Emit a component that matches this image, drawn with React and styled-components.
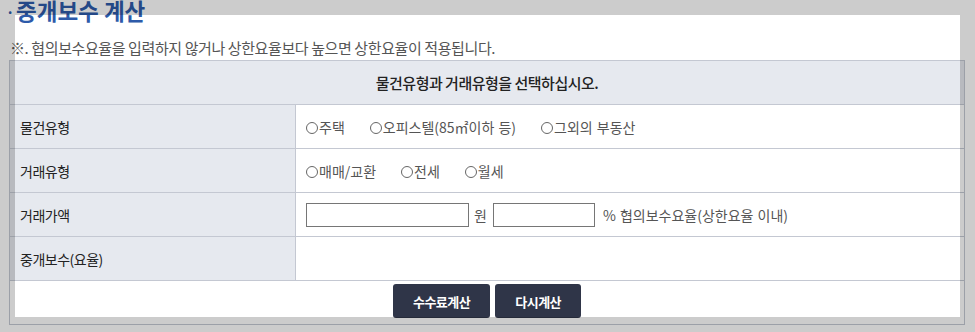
import React from "react";
import styled, { createGlobalStyle } from "styled-components";

const GlobalStyle = createGlobalStyle`
  html, body { margin: 0; padding: 0; background: #ffffff; }
  body {
    font-family: "Noto Sans CJK KR", "Noto Sans", sans-serif;
    font-size: 14px;
    color: #333;
  }
  * { box-sizing: border-box; }
`;

const LINE = "#c4c8d2";

const Page = styled.div`
  width: 965px;
  padding-left: 9px;
`;

const Title = styled.h2`
  margin: -1px 0 0;
  height: 27px;
  font-size: 22.5px;
  line-height: 22px;
  font-weight: 700;
  color: #2d5aa9;
  display: flex;
  align-items: flex-start;
`;

const Dot = styled.span`
  width: 10px;
  font-size: 14px;
  margin: 3px 0 0 -3px;
  line-height: 20px;
`;

const Note = styled.p`
  margin: 12px 0 0 1px;
  font-size: 15px;
  line-height: 20px;
  letter-spacing: -0.4px;
  color: #555;
`;

const Frame = styled.div`
  margin-top: 2px;
  width: 956px;
  border: 1px solid ${LINE};
`;

const HeaderRow = styled.div`
  height: 44px;
  border-bottom: 1px solid ${LINE};
  background: #e6e9ef;
  display: flex;
  align-items: center;
  justify-content: center;
  font-size: 15px;
  font-weight: 500;
  letter-spacing: -0.5px;
  color: #222;
`;

const Row = styled.div`
  height: 44px;
  border-bottom: 1px solid ${LINE};
  display: grid;
  grid-template-columns: 286px 1fr;
`;

const Label = styled.div`
  background: #e6e9ef;
  border-right: 1px solid ${LINE};
  display: flex;
  align-items: center;
  padding-left: 10px;
  font-size: 14px;
  letter-spacing: -0.5px;
  color: #222;
`;

const Value = styled.div`
  display: flex;
  align-items: center;
  gap: ${(p) => p.$gap || 0}px;
  padding-left: 10px;
  font-size: 14px;
  word-spacing: 1px;
  color: #555;
`;

const RadioLabel = styled.label`
  display: inline-flex;
  align-items: center;
  cursor: pointer;
`;

const Radio = styled.input.attrs({ type: "radio" })`
  appearance: none;
  -webkit-appearance: none;
  width: 12px;
  height: 12px;
  margin: 3px 1px 0 0;
  border: 1px solid #666;
  border-radius: 50%;
  background: #fff;
`;

const TextInput = styled.input.attrs({ type: "text" })`
  width: ${(p) => p.$w}px;
  height: 24px;
  border: 1px solid #767676;
  border-radius: 0;
  padding: 0 4px;
  font-size: 13px;
  background: #fff;
  margin: 0;
`;

const Unit = styled.span`
  margin: 0 ${(p) => p.$right}px 0 ${(p) => p.$left}px;
`;

const ButtonBar = styled.div`
  display: flex;
  justify-content: center;
  gap: 5px;
  padding: 3px 0 6px;
`;

const Button = styled.button`
  height: 34px;
  padding: 0 20px;
  border: none;
  border-radius: 3px;
  background: #2f3548;
  color: #fff;
  font-family: "Noto Sans CJK KR", sans-serif;
  font-size: 13px;
  font-weight: 700;
  letter-spacing: -0.5px;
  cursor: pointer;
`;

const Spotlight = styled.div`
  position: absolute;
  left: 15px;
  top: 15px;
  width: 945px;
  height: 302px;
  box-shadow: 0 0 0 3000px rgba(0, 0, 0, 0.2);
  pointer-events: none;
`;

export default function App() {
  return (
    <>
      <GlobalStyle />
      <Page>
        <Title>
          <Dot>·</Dot>중개보수 계산
        </Title>
        <Note>※. 협의보수요율을 입력하지 않거나 상한요율보다 높으면 상한요율이 적용됩니다.</Note>
        <Frame>
          <HeaderRow>물건유형과 거래유형을 선택하십시오.</HeaderRow>
          <Row>
            <Label>물건유형</Label>
            <Value $gap={25}>
              <RadioLabel><Radio name="obj" />주택</RadioLabel>
              <RadioLabel><Radio name="obj" />오피스텔(85㎡이하 등)</RadioLabel>
              <RadioLabel><Radio name="obj" />그외의 부동산</RadioLabel>
            </Value>
          </Row>
          <Row>
            <Label>거래유형</Label>
            <Value $gap={25}>
              <RadioLabel><Radio name="deal" />매매/교환</RadioLabel>
              <RadioLabel><Radio name="deal" />전세</RadioLabel>
              <RadioLabel><Radio name="deal" />월세</RadioLabel>
            </Value>
          </Row>
          <Row>
            <Label>거래가액</Label>
            <Value>
              <TextInput $w={163} />
              <Unit $left={5} $right={6}>원</Unit>
              <TextInput $w={102} />
              <Unit $left={8} $right={0}>% 협의보수요율(상한요율 이내)</Unit>
            </Value>
          </Row>
          <Row>
            <Label>중개보수(요율)</Label>
            <Value />
          </Row>
          <ButtonBar>
            <Button>수수료계산</Button>
            <Button>다시계산</Button>
          </ButtonBar>
        </Frame>
      </Page>
      <Spotlight />
    </>
  );
}
